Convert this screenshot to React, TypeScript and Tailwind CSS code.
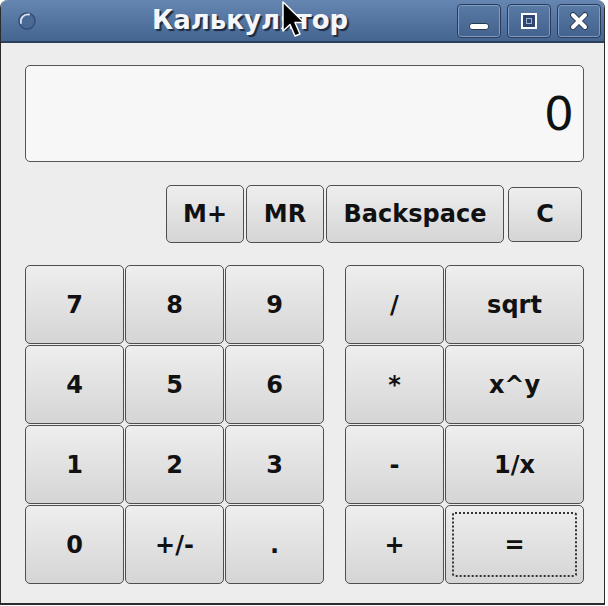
import React from "react";

const font = "font-['DejaVu_Sans',sans-serif]";

const Key = ({ label, focused = false, className = "" }: { label: string; focused?: boolean; className?: string }) => (
  <button
    className={`relative flex items-center justify-center rounded-[5px] border border-[#4f4f4f] bg-gradient-to-b from-[#eeeeee] to-[#d5d5d5] text-[24px] font-bold text-[#111] ${font} ${className}`}
  >
    {focused && (
      <span className="absolute inset-[6px] rounded-[3px] border-2 border-dotted border-[#333]"></span>
    )}
    <span className="relative">{label}</span>
  </button>
);

const WinButton = ({ children }: { children: React.ReactNode }) => (
  <div className="flex h-[34px] w-[44px] items-center justify-center rounded-[4px] border border-[#2a3b58] bg-gradient-to-b from-[#5a7aa6] to-[#43628e] shadow-[inset_0_0_0_1px_#7f9cc4]">
    {children}
  </div>
);

export default function App() {
  const left = ["7", "8", "9", "4", "5", "6", "1", "2", "3", "0", "+/-", "."];
  return (
    <div className="relative h-[606px] w-[608px] bg-white">
      <div className="flex h-[605px] w-[605px] flex-col overflow-hidden rounded-t-[8px] border-x border-b-2 border-[#2b2b2b] bg-[#ededed]">
        {/* title bar */}
        <div className="flex h-[43px] shrink-0 items-center border-b-2 border-[#2c3f5e] bg-gradient-to-b from-[#6686b2] to-[#456591] pl-[15px] pr-[3px]">
          <svg width="22" height="22" viewBox="0 0 22 22">
            <circle cx="11" cy="11" r="8" fill="#4a6a96" stroke="#334d73" strokeWidth="1.5" />
            <path d="M5 13 A7 7 0 0 1 13 4.5" fill="none" stroke="#d8e2f0" strokeWidth="1.8" strokeLinecap="round" />
          </svg>
          <div
            className={`flex-1 pl-[114px] text-left text-[26px] font-bold text-[#f4f6fa] ${font} [text-shadow:2px_2px_1px_#1c2a40]`}
          >
            Калькулятор
          </div>
          <div className="flex gap-[6px]">
            <WinButton>
              <div className="mt-[12px] h-[7px] w-[20px] rounded-[3px] border border-[#2a3b58] bg-white"></div>
            </WinButton>
            <WinButton>
              <div className="flex h-[16px] w-[16px] items-center justify-center border-2 border-white bg-[#2f4670]">
                <div className="h-[6px] w-[6px] border border-[#9fb3d0]"></div>
              </div>
            </WinButton>
            <WinButton>
              <svg width="22" height="22" viewBox="0 0 22 22">
                <path d="M5 5 L17 17 M17 5 L5 17" stroke="#2a3b58" strokeWidth="6" strokeLinecap="round" />
                <path d="M5 5 L17 17 M17 5 L5 17" stroke="#ffffff" strokeWidth="4" strokeLinecap="round" />
              </svg>
            </WinButton>
          </div>
        </div>

        {/* body */}
        <div className="flex flex-col pl-[24px] pt-[22px]">
          <div
            className={`flex h-[97px] w-[559px] items-center justify-end rounded-[5px] border border-[#555] bg-[#f7f7f7] pr-[9px] pt-[2px] text-[47px] text-[#111] ${font}`}
          >
            0
          </div>

          <div className="mt-[23px] flex h-[58px] w-[557px] items-center justify-end">
            <Key label="M+" className="h-[58px] w-[78px]" />
            <Key label="MR" className="ml-[2px] h-[58px] w-[78px]" />
            <Key label="Backspace" className="ml-[2px] h-[58px] w-[178px]" />
            <Key label="C" className="ml-[4px] h-[55px] w-[74px]" />
          </div>

          <div className="mt-[22px] flex gap-[21px]">
            <div className="grid grid-cols-[99px_99px_99px] grid-rows-[79px_79px_79px_79px] gap-[1px]">
              {left.map((k) => (
                <Key key={k} label={k} />
              ))}
            </div>
            <div className="grid grid-cols-[99px_139px] grid-rows-[79px_79px_79px_79px] gap-[1px]">
              <Key label="/" />
              <Key label="sqrt" />
              <Key label="*" />
              <Key label="x^y" />
              <Key label="-" />
              <Key label="1/x" />
              <Key label="+" />
              <Key label="=" focused />
            </div>
          </div>
        </div>
      </div>

      {/* mouse pointer */}
      <svg className="absolute left-[281px] top-[1px]" width="26" height="38" viewBox="0 0 26 38">
        <path
          d="M2 1 L2 30 L9 23.5 L14 35 L19 33 L14 21.5 L23 21.5 Z"
          fill="#000"
          stroke="#fff"
          strokeWidth="1.5"
          strokeLinejoin="round"
        />
      </svg>
    </div>
  );
}
